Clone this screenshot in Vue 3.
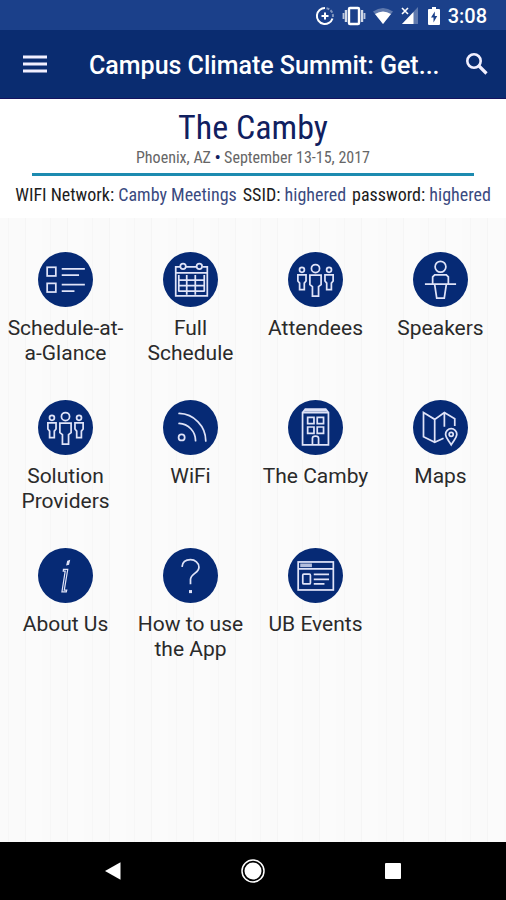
<script setup>
const tiles = [
  { icon: 'list', label: 'Schedule-at-a-Glance' },
  { icon: 'calendar', label: 'Full Schedule' },
  { icon: 'people', label: 'Attendees' },
  { icon: 'speaker', label: 'Speakers' },
  { icon: 'people', label: 'Solution Providers' },
  { icon: 'feed', label: 'WiFi' },
  { icon: 'building', label: 'The Camby' },
  { icon: 'map', label: 'Maps' },
  { icon: 'info', label: 'About Us' },
  { icon: 'help', label: 'How to use the App' },
  { icon: 'browser', label: 'UB Events' }
]
</script>

<template>
  <div class="screen">
    <div class="status">
      <svg width="20" height="20" viewBox="0 0 20 20" fill="none" stroke="#fff" stroke-width="2">
        <path d="M10 2A8 8 0 1 0 17.5 12.500" />
        <path d="M11.500 2.200A8 8 0 0 1 17.900 11" stroke-opacity=".45" stroke-dasharray="3 1.500" />
        <path d="M10 6.500v7M6.500 10h7" />
      </svg>
      <svg width="24" height="20" viewBox="0 0 24 20" fill="none" stroke="#fff">
        <rect x="7" y="2" width="10" height="16" rx="1" stroke-width="2.400" />
        <path d="M4 4v12M20 4v12" stroke-width="2.400" stroke-opacity=".8" />
        <path d="M1.500 7v6M22.500 7v6" stroke-width="1.800" stroke-opacity=".7" />
      </svg>
      <svg width="20" height="20" viewBox="0 0 20 20" fill="#fff">
        <path d="M10 18L0 5.500Q10-1.500 20 5.500Z" fill-opacity=".3" />
        <path d="M10 18L2 8Q10 3 18 8Z" />
      </svg>
      <svg width="20" height="20" viewBox="0 0 20 20" fill="#fff">
        <path d="M18 1v17H2Z" fill-opacity=".3" />
        <path d="M13.500 6v12H2Z" />
        <path d="M2 2l6 6M8 2l-6 6" stroke="#fff" stroke-width="1.600" />
      </svg>
      <svg width="14" height="20" viewBox="0 0 14 20">
        <path d="M2 3h3V1h4v2h3q1 0 1 1v14q0 1-1 1H2q-1 0-1-1V4q0-1 1-1Z" fill="#fff" />
        <path d="M7.800 5.500L4 11.500h2.500v5L10.200 10H7.800Z" fill="#1b408a" />
      </svg>
      <span class="time">3:08</span>
    </div>

    <header class="bar">
      <button class="tool" aria-label="Menu">
        <svg width="24" height="20" viewBox="0 0 24 20" stroke="#f1efff" stroke-width="2.800">
          <path d="M0 3h24M0 10h24M0 17h24" />
        </svg>
      </button>
      <h1>Campus Climate Summit: Get...</h1>
      <button class="tool" aria-label="Search">
        <svg width="24" height="24" viewBox="0 0 24 24" fill="none" stroke="#f1efff">
          <circle cx="9" cy="9" r="6.700" stroke-width="2.600" />
          <path d="M14 14l7.500 7.500" stroke-width="3.200" />
        </svg>
      </button>
    </header>

    <section class="banner">
      <h2>The Camby</h2>
      <p class="place">Phoenix, AZ <b>•</b> September 13-15, 2017</p>
      <hr />
      <p class="network">
        <span>WIFI Network: <em>Camby Meetings</em></span>
        <span>SSID: <em>highered</em></span>
        <span>password: <em>highered</em></span>
      </p>
    </section>

    <main>
      <nav class="grid">
        <a v-for="tile in tiles" :key="tile.label" href="#" class="tile">
          <svg class="disc" viewBox="0 0 54 54" fill="none" stroke="#dfe3f8" stroke-width="1.700">
            <circle cx="27" cy="27" r="27" fill="#062a75" stroke="none" />
            <g v-if="tile.icon === 'list'">
              <rect x="9" y="15" width="8.500" height="8.500" />
              <rect x="9" y="30.800" width="8.500" height="8.500" />
              <path d="M23.300 16.500H46M23.300 22.700h17M23.300 32H46M23.300 38.300h12.500" />
            </g>
            <g v-else-if="tile.icon === 'calendar'">
              <path d="M17 14.500h-4.500V43h31V14.500H39M22.500 14.500h10M12.500 20.500h31" />
              <circle cx="19.700" cy="14" r="2.700" />
              <circle cx="35.700" cy="14" r="2.700" />
              <path d="M15 27.500h26M15 33h26M15 38.500h26M23.300 22.500V42M31.700 22.500V42M15.500 22.500V38.500M40.500 22.500V38.500" />
            </g>
            <g v-else-if="tile.icon === 'people'">
              <circle cx="27" cy="16.300" r="4" />
              <path d="M21.500 22.800h11v9.200l-2.500 2v9.300h-6V34l-2.500-2Z" />
              <circle cx="13.700" cy="17.500" r="2.400" />
              <path d="M9.700 22.500h8v6l-1.700 2V37h-4.600v-6.500l-1.700-2Z" />
              <circle cx="40.300" cy="17.500" r="2.400" />
              <path d="M36.300 22.500h8v6l-1.700 2V37h-4.600v-6.500l-1.700-2Z" />
            </g>
            <g v-else-if="tile.icon === 'speaker'">
              <circle cx="27" cy="14.500" r="5.300" />
              <path d="M19.300 31v-6.500l2-2h11.400l2 2V31M11.700 31.500h30.600M21.300 32l2 13.200h7.400l2-13.200" />
            </g>
            <g v-else-if="tile.icon === 'feed'" stroke-linecap="round">
              <circle cx="18.300" cy="36.700" r="3" />
              <path d="M15.800 23A17 17 0 0 1 32 40M15.800 13.200A27 27 0 0 1 42 40.200" />
            </g>
            <g v-else-if="tile.icon === 'building'">
              <path d="M14.300 12.500h25.400V44H14.300ZM14.500 12l2.500-3h20l2.500 3M16 10.500h22" />
              <path d="M19.300 17h6.200v6.200h-6.200ZM28.700 17h6.200v6.200h-6.200ZM19.300 26.500h6.200v6.200h-6.200ZM28.700 26.500h6.200v6.200h-6.200Z" />
              <path d="M24 44v-6.500q0-2 3-2t3 2V44" />
            </g>
            <g v-else-if="tile.icon === 'map'">
              <path d="M30 37.500l-8.700 4-11-5.500V12.300L21.300 19l9.500-6.700L41 18.500v7M21.300 19v22.500M30.800 12.300v14" />
              <path d="M37.500 44c-2.500-4.500-5.500-7-5.500-10.300a5.500 5.500 0 0 1 11 0c0 3.300-3 5.800-5.500 10.300Z" />
              <circle cx="37.500" cy="33.700" r="2" />
            </g>
            <g v-else-if="tile.icon === 'info'" stroke-width="1.200">
              <path d="M29.200 13l1.600-.6-.8 3.600-1.600.4Z" fill="#dfe3f8" />
              <path d="M25 21h4.200l-3.400 20.300h2.400l-.4 1.700h-4.300l3.200-20.300H24.800Z" />
            </g>
            <g v-else-if="tile.icon === 'help'">
              <path d="M18.700 18.500c.4-4.500 3.800-7 8.300-7s8.300 3 8.300 7.300c0 6-8.300 6.200-8.300 12.200v4.500" />
              <path d="M27 41.300v3" stroke-width="3" />
            </g>
            <g v-else>
              <rect x="10" y="13.700" width="34.500" height="27.500" />
              <path d="M10 20.500h34.500M25.300 26h15M25.300 30.700h15M25.300 35.200h10.500" />
              <path d="M12 17h11.500" stroke-width="3.600" stroke-opacity=".8" />
              <rect x="14.500" y="25.700" width="7.500" height="9.600" rx="1" />
            </g>
          </svg>
          <span class="label">{{ tile.label }}</span>
        </a>
      </nav>
    </main>

    <footer class="keys">
      <button aria-label="Back">
        <svg width="24" height="24" viewBox="0 0 24 24" fill="#fff"><path d="M4 12L19.500 3.200v17.600Z" /></svg>
      </button>
      <button aria-label="Home">
        <svg width="24" height="24" viewBox="0 0 24 24" fill="#fff">
          <circle cx="12" cy="12" r="11" fill="none" stroke="#fff" stroke-width="1.500" />
          <circle cx="12" cy="12" r="8.500" />
        </svg>
      </button>
      <button aria-label="Recent apps">
        <svg width="24" height="24" viewBox="0 0 24 24" fill="#fff"><rect x="4" y="4" width="16" height="16" rx="1" /></svg>
      </button>
    </footer>
  </div>
</template>

<style>
body {
  margin: 0;
}
</style>

<style scoped>
.screen {
  min-height: 100vh;
  display: flex;
  flex-direction: column;
  background: #fafafa;
  font-family: Roboto, "Liberation Sans", sans-serif;
}
button {
  border: 0;
  padding: 0;
  background: none;
  display: flex;
}
.status {
  box-sizing: border-box;
  display: flex;
  align-items: center;
  justify-content: flex-end;
  gap: 7px;
  height: 30px;
  padding: 2px 19px 0 0;
  background: #1b408a;
}
.time {
  color: #fff;
  font-size: 20px;
  font-weight: 500;
  line-height: 28px;
}
.bar {
  display: flex;
  align-items: center;
  height: 68px;
  padding: 0 17px 0 23px;
  background: #0a2c70;
  border-bottom: 1px solid #15135f;
}
.bar h1 {
  flex: 1;
  margin: 0 0 0 42px;
  padding-top: 4px;
  color: #fff;
  font-size: 25px;
  font-weight: 500;
  line-height: 32px;
  white-space: nowrap;
}
.banner {
  padding: 8px 0 12px;
  background: #fff;
  text-align: center;
  font-family: "Roboto Condensed", Roboto, sans-serif;
}
.banner h2 {
  margin: 0;
  color: #10205f;
  font-size: 34px;
  font-weight: 400;
  line-height: 40px;
}
.place {
  margin: 0;
  color: #666;
  font-size: 16px;
  line-height: 22px;
}
.place b {
  color: #10205f;
}
.banner hr {
  margin: 4px 32px;
  border: 0;
  height: 3px;
  background: #1c8bb0;
}
.network {
  display: flex;
  justify-content: center;
  gap: 6px;
  margin: 0;
  padding-top: 4px;
  color: #1c1c1c;
  font-size: 18px;
  line-height: 22px;
  white-space: nowrap;
}
.network em {
  color: #3a4a80;
  font-style: normal;
}
main {
  flex: 1;
  padding: 34px 3px 0;
  background: repeating-linear-gradient(90deg, #fafafa 0 8px, #f6f6f6 8px 9px, #fafafa 9px 25px, #f5f5f5 25px 26px, #fbfbfb 26px 42px);
}
.grid {
  display: grid;
  grid-template-columns: repeat(4, 1fr);
  row-gap: 34px;
}
.tile {
  display: flex;
  flex-direction: column;
  align-items: center;
  gap: 9px;
  color: #2a2a2a;
  text-decoration: none;
}
.disc {
  width: 55px;
  height: 55px;
}
.label {
  max-width: 120px;
  font-size: 21px;
  font-weight: 400;
  line-height: 25px;
  text-align: center;
}
.keys {
  display: flex;
  justify-content: space-between;
  align-items: center;
  height: 58px;
  padding: 0 101px;
  background: #000;
}
</style>
